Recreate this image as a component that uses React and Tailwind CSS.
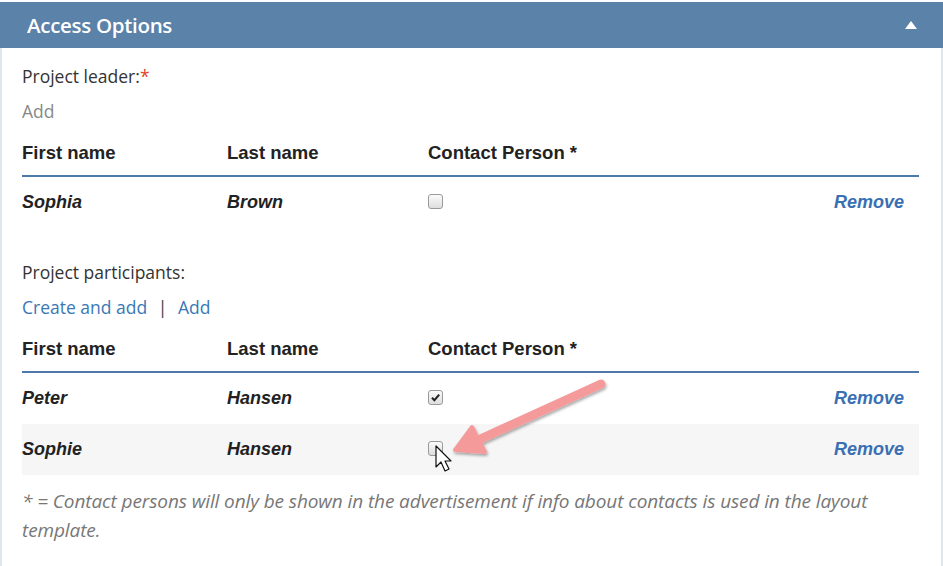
import React from "react";

const Checkbox = ({ checked }) => (
  <span className="flex h-[15px] w-[15px] items-center justify-center rounded-[3px] border border-[#9a9a9a] bg-gradient-to-b from-[#fbfbfb] to-[#dedede]">
    {checked && (
      <svg width="11" height="11" viewBox="0 0 11 11">
        <path d="M2 5.8 L4.4 8.2 L9.2 2.6" fill="none" stroke="#222" strokeWidth="2" />
      </svg>
    )}
  </span>
);

const PersonTable = ({ rows }) => (
  <div className="mr-[22px]">
    <div className="flex h-[46px] items-center border-b-2 border-[#4f78aa] font-['Liberation_Sans',sans-serif] text-[18.5px] font-bold text-[#222]">
      <div className="w-[205px]">First name</div>
      <div className="w-[201px]">Last name</div>
      <div>Contact Person *</div>
    </div>
    {rows.map((r, i) => (
      <div
        key={i}
        className={`flex h-[51px] items-center font-['Liberation_Sans',sans-serif] text-[18px] font-bold italic text-[#222] ${r.shaded ? "bg-[#f6f6f6]" : ""}`}
      >
        <div className="w-[205px]">{r.first}</div>
        <div className="w-[201px]">{r.last}</div>
        <div className="flex-1 -mt-[3px]">
          <Checkbox checked={r.checked} />
        </div>
        <div className="pr-[15px] text-[#3a6fb2]">Remove</div>
      </div>
    ))}
  </div>
);

export default function App() {
  return (
    <div className="relative h-[566px] w-[943px] overflow-hidden bg-white font-['Open_Sans',sans-serif]">
      <div className="mt-[2px] flex h-[46px] items-center justify-between bg-[#5b82a8] pl-[27px] pr-[26px]">
        <span className="text-[20.5px] font-semibold tracking-[-0.3px] text-white">Access Options</span>
        <svg width="12" height="8" viewBox="0 0 12 8">
          <path d="M0 8 L6 0 L12 8 Z" fill="#fff" />
        </svg>
      </div>
      <div className="border-l-2 border-r-2 border-[#dfe6ee] pl-[20px]">
        <div className="pt-[15px] text-[17.5px] leading-[26px] text-[#333]">
          Project leader:<span className="text-[#e0452b]">*</span>
        </div>
        <div className="pt-[9px] text-[17.5px] leading-[26px] text-[#888]">Add</div>
        <div className="pt-[7px]">
          <PersonTable rows={[{ first: "Sophia", last: "Brown", checked: false }]} />
        </div>
        <div className="pt-[31px] text-[17.5px] leading-[26px] text-[#333]">Project participants:</div>
        <div className="pt-[9px] text-[17.5px] leading-[26px] text-[#3a78b5]">
          Create and add <span className="mx-[6px] text-[#444]">|</span> Add
        </div>
        <div className="pt-[7px]">
          <PersonTable
            rows={[
              { first: "Peter", last: "Hansen", checked: true },
              { first: "Sophie", last: "Hansen", checked: false, shaded: true },
            ]}
          />
        </div>
        <div className="pb-[24px] pr-[40px] pt-[12px] text-[19px] italic leading-[29px] tracking-[-0.1px] text-[#777]">
          * = Contact persons will only be shown in the advertisement if info about contacts is used in the layout template.
        </div>
      </div>
      <svg className="pointer-events-none absolute left-0 top-0" width="943" height="566">
        <defs>
          <filter id="sh" x="-20%" y="-20%" width="140%" height="140%">
            <feDropShadow dx="1" dy="2" stdDeviation="1.5" floodColor="#000" floodOpacity="0.35" />
          </filter>
        </defs>
        <g filter="url(#sh)">
          <path d="M601 384 L476 441" stroke="#f59a9a" strokeWidth="9" strokeLinecap="round" fill="none" />
          <path d="M455 450 L472 427 L485 452 Z" fill="#f59a9a" stroke="#f59a9a" strokeWidth="4" strokeLinejoin="round" />
        </g>
        <path
          d="M436 446 L436 467 L441 462 L445 471 L449 469 L445 461 L451 461 Z"
          fill="#fff"
          stroke="#111"
          strokeWidth="1.2"
          strokeLinejoin="round"
        />
      </svg>
    </div>
  );
}
